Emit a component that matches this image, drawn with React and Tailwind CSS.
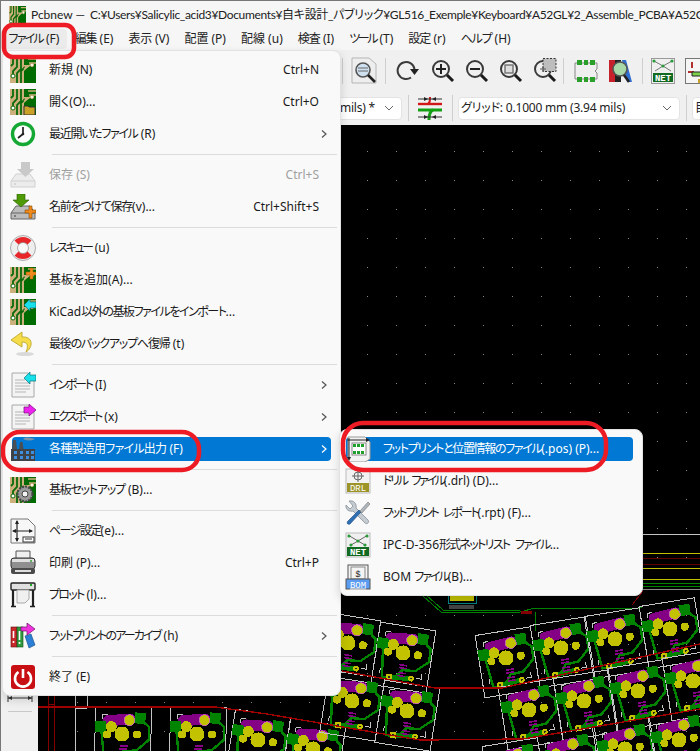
import React from 'react';

const FONT = "font-['Noto_Sans','Noto_Sans_CJK_JP',sans-serif] [font-feature-settings:'palt']";

// ---------- menu icons ----------

const PcbBase = () => (
  <g>
    <rect x="0" y="0" width="26" height="26" fill="#cdb07c" />
    <path d="M14 0H26V26H14V14L20 8H14Z" fill="#006b00" />
    <path d="M3 0V7L1 9M7 0V10L3 14V20M11 0V12L7 16V26M15 0V5L19 5M15 10L11 14V26" stroke="#0a6a0a" strokeWidth="1.8" fill="none" />
    <path d="M18 2H26M19 6H26M14 12L20 8" stroke="#cdb07c" strokeWidth="1.6" fill="none" />
    <circle cx="3" cy="19" r="2" fill="#fff" stroke="#0a6a0a" />
    <circle cx="22" cy="8" r="1.6" fill="#fff" stroke="#cdb07c" />
  </g>
);

const Icon = ({ children, size = 26 }) => (
  <svg width={size} height={size} viewBox="0 0 26 26" className="block shrink-0">
    {children}
  </svg>
);

const OpenIcon = () => (
  <Icon>
    <PcbBase />
    <path d="M14 17H18L19 18H25V26H14Z" fill="#c9a227" stroke="#333" />
  </Icon>
);

const PlusArrow = () => (
  <path d="M16 5H20V1H23V5H26V8H23V12H20V8H16Z" fill="#f08a1c" stroke="#a35a08" strokeWidth="0.5" />
);

const CyanArrow = () => (
  <path d="M14 6L20 0V3H26V9H20V12Z" fill="#19e0ea" stroke="#107078" strokeWidth="0.7" />
);

const ClockIcon = () => (
  <Icon>
    <circle cx="13" cy="13" r="10.5" fill="#fff" stroke="#16a834" strokeWidth="3.4" />
    <path d="M13 6V13L8 17" stroke="#222" strokeWidth="1.7" fill="none" />
    <circle cx="13" cy="13" r="1.3" fill="#222" />
  </Icon>
);

const DriveBody = ({ fill, stroke }) => (
  <g>
    <path d="M6 12H20L25 19V25H1V19Z" fill={fill} stroke={stroke} />
    <path d="M1 19H25" stroke={stroke} />
    <circle cx="5" cy="22" r="1" fill={stroke} />
  </g>
);

const SaveIcon = () => (
  <Icon>
    <DriveBody fill="#ececec" stroke="#d0d0d0" />
    <path d="M11 0H20V7H24L15.5 15L7 7H11Z" fill="#c9c9c9" />
  </Icon>
);

const SaveAsIcon = () => (
  <Icon>
    <DriveBody fill="#bcbcbc" stroke="#666" />
    <path d="M7 0H15V6H19L11 13L3 6H7Z" fill="#4e9a06" stroke="#2c5a02" strokeWidth="0.6" />
    <path d="M15 16H19V12H22V16H26V19H22V24H19V19H15Z" fill="#f08a1c" stroke="#8c4c05" strokeWidth="0.6" />
  </Icon>
);

const RescueIcon = () => (
  <Icon>
    <circle cx="13" cy="13" r="9.5" fill="none" stroke="#eee" strokeWidth="6.5" />
    <circle cx="13" cy="13" r="12.5" fill="none" stroke="#999" strokeWidth="0.8" />
    <path d="M4.5 5.5A12 12 0 0 1 21.5 5.5L17 10A6 6 0 0 0 9 10ZM4.5 20.5A12 12 0 0 0 21.5 20.5L17 16A6 6 0 0 1 9 16Z" fill="#e8262a" />
    <circle cx="13" cy="13" r="5.5" fill="#f9f9f9" stroke="#888" strokeWidth="0.7" />
  </Icon>
);

const UndoIcon = () => (
  <Icon>
    <ellipse cx="15" cy="23" rx="9" ry="2" fill="#d9d9d9" />
    <path d="M12 1L1 9L12 16V11C17 11 19 14 16 21C23 17 24 5 12 6Z" fill="#f4dc4a" stroke="#b8a022" strokeWidth="0.8" />
  </Icon>
);

const DocBase = () => (
  <path d="M2 1H18L24 7V25H2Z" fill="#f4f4f4" stroke="#a8a8a8" />
);

const DocLines = () => (
  <path d="M5 8H15M5 11H20M5 14H20M5 17H20M5 20H16" stroke="#b5b5b5" fill="none" />
);

const ImportIcon = () => (
  <Icon>
    <DocBase />
    <DocLines />
    <CyanArrow />
  </Icon>
);

const ExportIcon = () => (
  <Icon>
    <DocBase />
    <DocLines />
    <path d="M14 3H19V0L26 6L19 12V9H14Z" fill="#ee22ee" stroke="#771177" strokeWidth="0.7" />
  </Icon>
);

const FactoryIcon = () => (
  <Icon>
    <path d="M13 3C16 0 21 2 25 3C21 5 17 5 13 3Z" fill="#7d93a8" />
    <path d="M3 4H6L7 13H2ZM10 6H12.5L13.5 13H9Z" fill="#4a4f55" />
    <rect x="1" y="13" width="24" height="12" fill="#3e434a" />
    <path d="M4 15H7V18H4ZM10 15H13V18H10ZM16 15H19V18H16ZM21 15H24V18H21ZM4 20H7V23H4ZM10 20H13V23H10ZM16 20H19V23H16ZM21 20H24V23H21Z" fill="#3f8fe0" />
  </Icon>
);

const SetupIcon = () => (
  <Icon>
    <PcbBase />
    <circle cx="15" cy="17" r="7.5" fill="#9a9a9a" stroke="#444" strokeDasharray="2 1.2" strokeWidth="2.2" />
    <circle cx="15" cy="17" r="3" fill="#f3f3f3" stroke="#444" />
  </Icon>
);

const PageIcon = () => (
  <Icon>
    <path d="M1 1H18L25 8V25H1Z" fill="#f7f7f7" stroke="#777" />
    <path d="M7 3V23M3 13H22" stroke="#222" strokeWidth="1.2" />
    <path d="M7 2L5 6H9ZM7 24L5 20H9ZM2 13L6 11V15ZM23 13L19 11V15Z" fill="#222" />
    <rect x="13" y="19" width="11" height="5" fill="#fff" stroke="#333" />
    <path d="M15 21H22" stroke="#333" />
  </Icon>
);

const PrinterIcon = () => (
  <Icon>
    <path d="M6 1H20V9H6Z" fill="#efefef" stroke="#555" />
    <rect x="1" y="8" width="24" height="11" rx="3" fill="#8f8f8f" stroke="#333" />
    <rect x="2" y="9" width="22" height="3" fill="#e0e0e0" />
    <circle cx="21" cy="11" r="1" fill="#32a032" />
    <rect x="1" y="18" width="24" height="6" rx="2" fill="#4b4b4b" />
    <rect x="5" y="20" width="16" height="2" fill="#ddd" />
  </Icon>
);

const PlotterIcon = () => (
  <Icon>
    <rect x="1" y="1" width="24" height="7" rx="1" fill="#e0e0e0" stroke="#222" strokeWidth="1.4" />
    <rect x="20" y="2" width="2" height="2" fill="#22aa22" />
    <path d="M7 8H19V17L15 21H7Z" fill="#f0f0f0" stroke="#aaa" />
    <path d="M3 8V24M23 8V24" stroke="#222" strokeWidth="2.2" />
    <path d="M1 24.5H6M20 24.5H25" stroke="#222" strokeWidth="1.6" />
  </Icon>
);

const ArchiveIcon = () => (
  <Icon>
    <rect x="1" y="4" width="6" height="20" fill="#c8282a" stroke="#601010" strokeWidth="0.6" />
    <rect x="7" y="4" width="6" height="20" fill="#2f9a3c" stroke="#124c18" strokeWidth="0.6" />
    <path d="M3.5 8V15M3.5 18V20M9.5 8V17M9.5 19V21" stroke="#fff" strokeWidth="1.6" />
    <path d="M15 13L21 11L25 22L19 25Z" fill="#2d7fd6" stroke="#134a85" strokeWidth="0.6" />
    <path d="M11 4H17V0L25 6L17 12V8H11Z" fill="#ee33dd" stroke="#701068" strokeWidth="0.7" />
  </Icon>
);

const PowerIcon = () => (
  <Icon>
    <rect x="1" y="1" width="24" height="24" rx="3" fill="#c80f14" />
    <path d="M8.5 8A8 8 0 1 0 17.5 8" stroke="#fff" strokeWidth="2.6" fill="none" />
    <path d="M13 5V14" stroke="#fff" strokeWidth="2.6" />
  </Icon>
);

const PosIcon = () => (
  <Icon>
    <path d="M3 1H20L25 6V23L20 26H3Z" fill="#f2f2f2" stroke="#999" />
    <path d="M2 4H23M4 2V23" stroke="#222" />
    <path d="M25 4L21 2V6ZM4 25L2 21H6Z" fill="#222" />
    <rect x="7" y="7" width="14" height="12" fill="#fff" stroke="#888" />
    <path d="M8 8H11V11H8ZM12 8H15V11H12ZM16 8H19V11H16ZM8 15H11V18H8ZM12 15H15V18H12ZM16 15H19V18H16Z" fill="#1fa02c" />
  </Icon>
);

const DrlIcon = () => (
  <Icon>
    <rect x="1" y="1" width="24" height="24" fill="#f2f2f2" stroke="#bbb" />
    <circle cx="13" cy="8" r="4" fill="none" stroke="#666" />
    <path d="M13 2V14M7 8H19" stroke="#666" />
    <rect x="2" y="15" width="22" height="9" fill="#9c9428" />
    <text x="13" y="23" textAnchor="middle" fontSize="9" fill="#fff" fontFamily="Liberation Mono, monospace">DRL</text>
  </Icon>
);

const ToolIcon = () => (
  <Icon>
    <path d="M1 5L5 9L8 6L4 1C9 0 12 4 11 8L23 20C25 22 22 25 20 23L8 11C5 12 0 10 1 5Z" fill="#c4ccd2" stroke="#7d878f" strokeWidth="0.7" />
    <path d="M3 21L14 10L16 12L5 24C3 25 1 23 3 21Z" fill="#2f6fb4" stroke="#1a4a80" strokeWidth="0.6" />
    <path d="M15 11L23 2L25 4L17 13Z" fill="#aeb6bc" stroke="#777" strokeWidth="0.6" />
  </Icon>
);

const NetIcon = () => (
  <Icon>
    <rect x="1" y="1" width="24" height="24" fill="#f0f0f0" stroke="#bbb" />
    <path d="M3 3L13 9L23 3M13 9L6 13M13 9L20 13" stroke="#666" fill="none" />
    <circle cx="4" cy="4" r="1.6" fill="#2a9a3a" />
    <circle cx="22" cy="4" r="1.6" fill="#2a9a3a" />
    <circle cx="13" cy="9" r="1.6" fill="#2a9a3a" />
    <circle cx="6" cy="13" r="1.6" fill="#2a9a3a" />
    <circle cx="20" cy="13" r="1.6" fill="#2a9a3a" />
    <rect x="2" y="15" width="22" height="9" fill="#126a22" />
    <text x="13" y="23" textAnchor="middle" fontSize="9" fontWeight="700" fill="#fff" fontFamily="Liberation Mono, monospace">NET</text>
  </Icon>
);

const BomIcon = () => (
  <Icon>
    <rect x="3" y="1" width="20" height="17" fill="#f4f4f4" stroke="#555" />
    <rect x="6" y="3" width="14" height="12" fill="none" stroke="#888" />
    <text x="13" y="13" textAnchor="middle" fontSize="9" fill="#222" fontFamily="Liberation Mono, monospace">$</text>
    <rect x="1" y="15" width="24" height="10" fill="#5c9cf0" stroke="#555" />
    <text x="13" y="23.5" textAnchor="middle" fontSize="9" fill="#fff" textDecoration="underline" fontFamily="Liberation Mono, monospace">BOM</text>
  </Icon>
);

// tr only narrows the kana part (kana): the reference's are narrower than Noto's, the latin is about right
const MENU = [
  { kana: '新規', suf: ' (N)', shortcut: 'Ctrl+N', icon: <Icon><PcbBase /></Icon> },
  { kana: '開く', suf: '(O)...', shortcut: 'Ctrl+O', icon: <OpenIcon /> },
  { kana: '最近開いたファイル', suf: ' (R)', tr: 'tracking-[-1.3px]', arrow: true, icon: <ClockIcon /> },
  { sep: true },
  { kana: '保存', suf: ' (S)', shortcut: 'Ctrl+S', disabled: true, icon: <SaveIcon /> },
  { kana: '名前をつけて保存', suf: '(v)...', tr: 'tracking-[-1.25px]', shortcut: 'Ctrl+Shift+S', icon: <SaveAsIcon /> },
  { sep: true },
  { kana: 'レスキュー', suf: ' (u)', tr: 'tracking-[-2.4px]', icon: <RescueIcon /> },
  { kana: '基板を追加', suf: '(A)...', icon: <Icon><PcbBase /><PlusArrow /></Icon> },
  { pre: 'KiCad', kana: '以外の基板ファイルをインポート', suf: '...', tr: 'tracking-[-1.45px]', icon: <Icon><PcbBase /><CyanArrow /></Icon> },
  { kana: '最後のバックアップへ復帰', suf: ' (t)', tr: 'tracking-[-1.2px]', icon: <UndoIcon /> },
  { sep: true },
  { kana: 'インポート', suf: ' (I)', tr: 'tracking-[-2.2px]', arrow: true, icon: <ImportIcon /> },
  { kana: 'エクスポート', suf: ' (x)', tr: 'tracking-[-2.2px]', arrow: true, icon: <ExportIcon /> },
  { kana: '各種製造用ファイル出力', suf: ' (F)', tr: 'tracking-[-0.75px]', arrow: true, active: true, icon: <FactoryIcon /> },
  { sep: true },
  { kana: '基板セットアップ', suf: ' (B)...', tr: 'tracking-[-1.25px]', icon: <SetupIcon /> },
  { sep: true },
  { kana: 'ページ設定', suf: '(e)...', tr: 'tracking-[-1.6px]', icon: <PageIcon /> },
  { kana: '印刷', suf: ' (P)...', shortcut: 'Ctrl+P', icon: <PrinterIcon /> },
  { kana: 'プロット', suf: ' (l)...', tr: 'tracking-[-1.75px]', icon: <PlotterIcon /> },
  { sep: true },
  { kana: 'フットプリントのアーカイブ', suf: ' (h)', tr: 'tracking-[-1.85px]', arrow: true, icon: <ArchiveIcon /> },
  { sep: true },
  { kana: '終了', suf: ' (E)', icon: <PowerIcon /> },
];

const SUBMENU = [
  { kana: 'フットプリントと位置情報のファイル', suf: '(.pos) (P)...', tr: 'tracking-[-1.35px]', active: true, icon: <PosIcon /> },
  { kana: 'ドリル ファイル', suf: '(.drl) (D)...', tr: 'tracking-[-2.3px] [word-spacing:4px]', icon: <DrlIcon /> },
  { kana: 'フットプリント レポート', suf: '(.rpt) (F)...', tr: 'tracking-[-2.1px] [word-spacing:4px]', icon: <ToolIcon /> },
  { pre: 'IPC-D-356', kana: '形式ネットリスト ファイル', suf: '...', tr: 'tracking-[-1.7px] [word-spacing:4px]', icon: <NetIcon /> },
  { pre: 'BOM ', kana: 'ファイル', suf: '(B)...', tr: 'tracking-[-2px]', icon: <BomIcon /> },
];

const Chevron = ({ color = '#555' }) => (
  <svg width="8" height="10" viewBox="0 0 8 10" className="block">
    <path d="M2 1.5L6 5L2 8.5" stroke={color} strokeWidth="1.2" fill="none" />
  </svg>
);

const MenuRow = ({ item, sub }) => (
  <div className="relative h-8 flex items-center">
    {item.active && <div className={`absolute right-[9px] top-1 h-6 rounded bg-[#0078d4] ${sub ? 'left-[6px]' : 'left-[9px]'}`} />}
    <div className={`relative shrink-0 ${sub ? 'w-[43px] pl-[5px]' : 'w-[46px] pl-[7px]'}`}>{item.icon}</div>
    <span className={`relative flex-1 whitespace-pre text-xs ${item.active ? 'text-white' : item.disabled ? 'text-[#a0a0a0]' : 'text-[#1a1a1a]'}`}>
      {item.pre}
      <span className={item.tr || ''}>{item.kana}</span>
      {item.suf}
    </span>
    {item.shortcut && (
      <span className={`mr-[21px] text-xs ${item.disabled ? 'text-[#a0a0a0]' : 'text-[#1a1a1a]'}`}>{item.shortcut}</span>
    )}
    {item.arrow && (
      <div className="relative mr-3">
        <Chevron color={item.active ? '#ffffff' : '#555555'} />
      </div>
    )}
  </div>
);

// ---------- toolbar icons ----------

const Magnifier = ({ children }) => (
  <svg width="24" height="26" viewBox="0 0 24 26" className="block">
    <circle cx="10" cy="11" r="8" fill="none" stroke="#3a3a3a" strokeWidth="2" />
    <path d="M16 17L22 23" stroke="#1a1a1a" strokeWidth="3" />
    {children}
  </svg>
);

const ToolSep = () => <div className="w-px h-[26px] bg-[#cfcfcf] shrink-0" />;

const Toolbar = () => (
  <div className="h-[41px] bg-[#f0f0f0] flex items-center pl-[341px] overflow-hidden">
    <ToolSep />
    <svg width="26" height="27" viewBox="0 0 26 27" className="block ml-[8px] shrink-0">
      <path d="M1 1H18L25 7V26H1Z" fill="#eee" stroke="#b5b5b5" />
      <circle cx="12" cy="13" r="7" fill="#cfe0f0" stroke="#555" strokeWidth="1.6" />
      <path d="M7 11H17M7 14H17" stroke="#666" />
      <path d="M17 18L24 25" stroke="#222" strokeWidth="2.6" />
    </svg>
    <div className="ml-[8px]"><ToolSep /></div>
    <svg width="24" height="24" viewBox="0 0 24 24" className="block ml-[10px] shrink-0">
      <path d="M15 18.5A8.5 8.5 0 1 1 18.5 10" stroke="#3a3a3a" strokeWidth="2" fill="none" />
      <path d="M14 10H23L18.5 16Z" fill="#222" />
    </svg>
    <div className="ml-[11px]">
      <Magnifier><path d="M10 6V16M5 11H15" stroke="#222" strokeWidth="2" /></Magnifier>
    </div>
    <div className="ml-[10px]">
      <Magnifier><path d="M5 11H15" stroke="#222" strokeWidth="2" /></Magnifier>
    </div>
    <div className="ml-[10px]">
      <Magnifier><rect x="6" y="7" width="8" height="8" fill="#ddd" stroke="#777" strokeWidth="1.5" /></Magnifier>
    </div>
    <div className="ml-[10px]">
      <Magnifier>
        <rect x="10" y="0.5" width="13" height="13" fill="#bdbdbd" stroke="#333" strokeDasharray="2 1.5" />
        <path d="M7 11H13M10 8V14" stroke="#555" />
      </Magnifier>
    </div>
    <div className="ml-[6px]"><ToolSep /></div>
    <svg width="24" height="24" viewBox="0 0 24 24" className="block ml-[10px] shrink-0">
      <path d="M1 4H23V10L21 12L23 14V20H1Z" fill="#efefef" stroke="#888" />
      <path d="M3 1H8V6H3ZM10 1H14V6H10ZM16 1H21V6H16ZM3 18H8V23H3ZM10 18H14V23H10ZM16 18H21V23H16Z" fill="#2aa02a" />
    </svg>
    <svg width="24" height="26" viewBox="0 0 24 26" className="block ml-[10px] shrink-0">
      <rect x="1" y="2" width="6" height="22" fill="#c8202a" />
      <rect x="7" y="2" width="6" height="22" fill="#222" />
      <path d="M14 2H18L24 24H19Z" fill="#2e6fd0" />
      <circle cx="12" cy="11" r="7" fill="#a8d8a8" stroke="#555" strokeWidth="1.6" />
      <path d="M16 17L21 24" stroke="#222" strokeWidth="2.6" />
    </svg>
    <div className="ml-[10px]"><ToolSep /></div>
    <svg width="24" height="26" viewBox="0 0 24 26" className="block ml-[8px] shrink-0">
      <rect x="0.5" y="0.5" width="23" height="25" fill="#efefef" stroke="#999" />
      <path d="M3 3L12 8L21 3M12 8L4 13M12 8L20 13" stroke="#777" fill="none" />
      <circle cx="3" cy="3" r="1.6" fill="#2a9a3a" />
      <circle cx="21" cy="3" r="1.6" fill="#2a9a3a" />
      <circle cx="12" cy="8" r="1.6" fill="#2a9a3a" />
      <rect x="2" y="15" width="20" height="9" fill="#126a22" />
      <text x="12" y="23" textAnchor="middle" fontSize="9" fontWeight="700" fill="#fff" fontFamily="Liberation Mono, monospace">NET</text>
    </svg>
    <svg width="26" height="26" viewBox="0 0 26 26" className="block ml-[10px] shrink-0">
      <rect x="0.5" y="0.5" width="25" height="25" fill="#f5f5f5" stroke="#777" />
      <path d="M7 4V10M3 14H9" stroke="#b03030" strokeWidth="2" />
      <path d="M7 14H16V10L25 16L16 22V18H7Z" fill="#7cd04a" stroke="#222" />
      <path d="M14 25V21M18 25V20M22 25V21" stroke="#c8a028" strokeWidth="2" />
    </svg>
  </div>
);

const Dropdown = ({ className, children }) => (
  <div className={`h-[23px] bg-white border border-[#e3e3e3] rounded flex items-center text-xs text-[#222] whitespace-nowrap overflow-hidden shrink-0 ${className}`}>
    {children}
  </div>
);

const DropChevron = () => (
  <svg width="10" height="6" viewBox="0 0 10 6" className="block shrink-0">
    <path d="M1 1L5 5L9 1" stroke="#666" fill="none" />
  </svg>
);

const AuxToolbar = () => (
  <div className="h-[34px] bg-[#f0f0f0] flex items-center pl-[279px] overflow-hidden">
    <Dropdown className="w-[122px] justify-end pr-[7px] gap-[9px]">
      <span className="tracking-[-0.2px]">7 mils) *</span>
      <DropChevron />
    </Dropdown>
    <div className="ml-[6px]"><ToolSep /></div>
    <svg width="26" height="25" viewBox="0 0 26 25" className="block ml-[8px] shrink-0">
      <path d="M1 8H25" stroke="#d01818" strokeWidth="2.4" />
      <path d="M10 8C13 8 13 5 13 1" stroke="#d01818" strokeWidth="2" fill="none" />
      <path d="M1 14H25" stroke="#14a014" strokeWidth="3" />
      <path d="M16 14C13 15 12 18 12 24" stroke="#14a014" strokeWidth="3" fill="none" />
      <path d="M1 3H25M1 21H25" stroke="#333" />
      <path d="M11 3L7 1V5ZM15 3L19 1V5ZM11 21L7 19V23ZM15 21L19 19V23Z" fill="#222" />
    </svg>
    <div className="ml-[9px]"><ToolSep /></div>
    <Dropdown className="ml-[5px] w-[222px] pl-[2px] pr-[7px] justify-between">
      <span className="tracking-[-0.2px]">グリッド: 0.1000 mm (3.94 mils)</span>
      <DropChevron />
    </Dropdown>
    <div className="ml-[6px]"><ToolSep /></div>
    <Dropdown className="ml-[5px] w-[60px] pl-[2px]">
      <span>目</span>
    </Dropdown>
  </div>
);

// ---------- board canvas ----------

const KEYS = [
  [122, 733, 2], [197, 733, 2], [258, 739, 9], [313, 748, 9],
  [348, 642, 9], [403, 652, 9], [352, 700, 9], [407, 710, 9],
  [506, 657, -9], [561, 647, -9], [615, 638, -9], [670, 628, -9],
  [529, 709, -9], [584, 700, -9], [638, 690, -9], [693, 680, -9],
  [513, 768, -9], [568, 758, -9], [625, 748, -9], [679, 739, -9],
];

const GRID_X = Array.from({ length: 23 }, (_, i) => 48 + i * 29);
const GRID_Y = Array.from({ length: 22 }, (_, i) => 150 + i * 29);

const Key = ({ x, y, r }) => (
  <g transform={`translate(${x} ${y}) rotate(${r})`}>
    <rect x="-27" y="-27" width="56" height="63" fill="none" stroke="#c4c4c4" />
    <path d="M-20 -14V-19H-15M22 -14V-19H17M-20 18V23M22 18V23H17" stroke="#c4c4c4" fill="none" />
    <path d="M-14 -13L8 -15" stroke="#840084" strokeWidth="11" strokeLinecap="round" />
    <path d="M-21 -5L-17 27H-8M19 -14L27 -8V5L15 16L2 17L-3 24" stroke="#008400" strokeWidth="2.4" fill="none" />
    <path d="M-10 26L12 24" stroke="#008400" strokeWidth="5" />
    <rect x="-27" y="-12" width="11" height="11" fill="#008400" />
    <rect x="12" y="-22" width="11" height="11" fill="#008400" />
    <circle cx="0" cy="0" r="7.5" fill="#c2c200" />
    <circle cx="-11" cy="-7" r="5.5" fill="#c2c200" />
    <circle cx="-15" cy="1" r="4" fill="#c2c200" />
    <circle cx="15" cy="0" r="4" fill="#c2c200" />
    <circle cx="7" cy="-14" r="5.5" fill="#c2c200" stroke="#c85ac8" strokeWidth="0.8" />
    <rect x="-13" y="23" width="6" height="6" fill="#c2c200" />
    <rect x="-11" y="25" width="2" height="2" fill="#222" />
    <circle cx="12" cy="24" r="3" fill="#c2c200" />
    <circle cx="12" cy="24" r="1" fill="#222" />
    <path d="M-2 12H6M-2 15H6M-2 20H6M-2 23H6" stroke="#840084" strokeWidth="1.6" />
  </g>
);

const BoardCanvas = () => (
  <svg viewBox="38 124 662 627" width="662" height="627" className="block bg-black" shapeRendering="crispEdges">
    {GRID_X.map((x) => GRID_Y.map((y) => <rect key={`${x}-${y}`} x={x} y={y} width="1" height="1" fill="#8a8a8a" />))}
    <path d="M340 533H700" stroke="#c4c4c4" />
    <path d="M340 552H700M340 567H700M340 578H700" stroke="#c2c200" />
    <path d="M340 557H700M340 563H700" stroke="#600000" />
    <path d="M340 582H700M340 585H700" stroke="#008400" />
    <path d="M340 588H700" stroke="#8a8a8a" />
    <path d="M423 595L441 611H520L535 607H640L645 604" stroke="#008400" fill="none" />
    <path d="M426 594L443 609H520" stroke="#008400" fill="none" />
    <path d="M521 611H532" stroke="#840000" strokeWidth="3" />
    <path d="M643 590L632 604" stroke="#840000" />
    <path d="M535 611L536 630" stroke="#008400" />
    <rect x="448" y="590" width="28" height="12" fill="none" stroke="#008484" />
    <path d="M450 592H474V600H450Z" fill="#c2c200" />
    <rect x="449" y="604" width="25" height="4" fill="#444" />
    <path d="M48 695V760M54 695V760M48 703H54" stroke="#840000" />
    <path d="M75 695V760" stroke="#c4c4c4" />
    <path d="M87 695V707M75 707H87" stroke="#c4c4c4" />
    {KEYS.map(([x, y, r]) => <Key key={`${x}-${y}`} x={x} y={y} r={r} />)}
    <path d="M38 706H215L267 713L378 732L420 739L523 738L700 708" stroke="#a00000" strokeWidth="1.4" fill="none" />
    <path d="M342 670L435 687L502 687L700 643" stroke="#a00000" strokeWidth="1.4" fill="none" />
  </svg>
);

// ---------- page ----------

const MENU_BAR = [
  ['ファイル', ' (F)', 'tracking-[-1.8px]', 'bg-[#ebebeb]'],
  ['編集', ' (E)', 'tracking-[-1px]', ''],
  ['表示', ' (V)', 'tracking-[-0.3px]', ''],
  ['配置', ' (P)', 'tracking-[0px]', ''],
  ['配線', ' (u)', 'tracking-[0px]', ''],
  ['検査', ' (I)', 'tracking-[-1px]', ''],
  ['ツール', ' (T)', 'tracking-[-2.3px]', ''],
  ['設定', ' (r)', 'tracking-[-1px]', ''],
  ['ヘルプ', ' (H)', 'tracking-[-1.2px]', ''],
];

export default function App() {
  return (
    <div className={`relative w-[700px] h-[751px] overflow-hidden bg-[#f3f3f3] border-t border-l border-[#777] ${FONT}`}>
      {/* title bar */}
      <div className="h-[27px] flex items-center pl-[8px] bg-[#f6f6f6] whitespace-nowrap overflow-hidden">
        <svg width="17" height="21" viewBox="0 0 26 26" preserveAspectRatio="none" className="block shrink-0 mt-1">
          <PcbBase />
        </svg>
        <span className="ml-[5px] text-xs text-[#222] font-['Lato','Noto_Sans_CJK_JP',sans-serif]">
          <span>Pcbnew —</span>
          <span className="ml-[5px] tracking-[-0.35px]">
            C:¥Users¥Salicylic_acid3¥Documents¥自キ設計_パブリック¥GL516_Exemple¥Keyboard¥A52GL¥2_Assemble_PCBA¥A52G
          </span>
        </span>
      </div>

      {/* menu bar */}
      <div className="h-[22px] flex items-center pl-0 bg-[#f6f6f6]">
        {MENU_BAR.map(([kana, suf, tr, extra]) => (
          <span key={kana} className={`h-[20px] leading-[20px] px-[7.5px] rounded text-xs text-[#222] whitespace-pre ${extra}`}>
            <span className={tr}>{kana}</span>
            {suf}
          </span>
        ))}
      </div>

      <Toolbar />
      <AuxToolbar />

      {/* left toolbar + canvas */}
      <div className="flex">
        <div className="w-[37px] h-[626px] bg-[#f0f0f0] shrink-0 flex flex-col justify-end items-center pb-[39px]">
          <svg width="26" height="8" viewBox="0 0 26 8" className="block">
            <path d="M1 0V8M25 0V8M1 4H25" stroke="#333" />
            <path d="M1 4L5 2V6ZM25 4L21 2V6Z" fill="#333" />
          </svg>
          <div className="w-[24px] h-px bg-[#c8c8c8] mt-[9px]" />
        </div>
        <BoardCanvas />
      </div>

      {/* file menu */}
      <div className="absolute left-[1px] top-[49px] w-[339px] h-[646px] pt-[3px] bg-[#f9f9f9] border border-[#e2e2e2] rounded-lg shadow-[0_4px_10px_rgba(0,0,0,0.15)]">
        {MENU.map((item, i) =>
          item.sep ? (
            <div key={i} className="h-[9px] flex items-center pl-[49px] pr-[3px]">
              <div className="h-px w-full bg-[#dcdcdc]" />
            </div>
          ) : (
            <MenuRow key={i} item={item} />
          )
        )}
      </div>

      {/* export submenu */}
      <div className="absolute left-[338px] top-[428px] w-[304px] h-[167px] pt-[3px] bg-[#f9f9f9] border border-[#e2e2e2] rounded-lg shadow-[0_4px_10px_rgba(0,0,0,0.15)]">
        {SUBMENU.map((item) => (
          <MenuRow key={item.kana} item={item} sub />
        ))}
      </div>

      {/* hand drawn red marks */}
      <svg width="700" height="751" viewBox="0 0 700 751" className="absolute left-[-1px] top-[-1px] pointer-events-none">
        <g fill="none" stroke="#ed1c24" strokeWidth="4.5">
          <rect x="4" y="25" width="70" height="32" rx="9" />
          <rect x="3" y="432" width="196" height="38" rx="17" />
          <rect x="343" y="423" width="263" height="47" rx="20" />
        </g>
      </svg>
    </div>
  );
}
